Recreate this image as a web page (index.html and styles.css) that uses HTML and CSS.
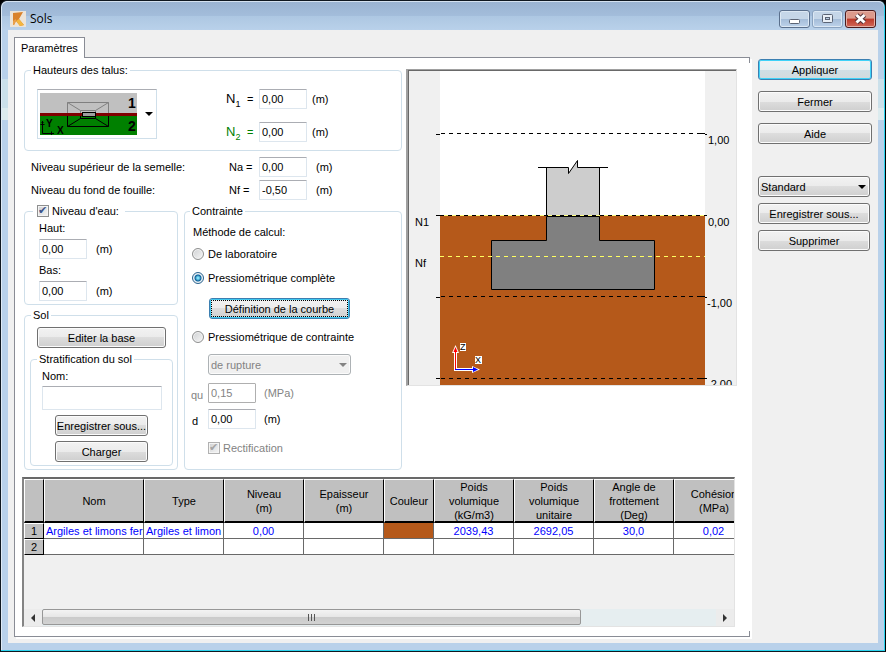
FILE: index.html
```html
<!DOCTYPE html>
<html lang="fr">
<head>
  <meta charset="UTF-8">
  <meta name="viewport" content="width=device-width, initial-scale=1.0">
  <title>Sols</title>
  <link rel="stylesheet" href="styles.css">
</head>
<body>
  <div class="window">
    <header class="titlebar">
      <svg class="app-icon" width="16" height="16" viewBox="0 0 16 16">
        <rect width="16" height="16" fill="#ece4d8"/>
        <path d="M3 2 L13 1 L9 8 L14 14 L10 15 L6 10 L4 14 L3 14 Z" fill="#d9822b"/>
        <path d="M3 10 L6 8 L6 10 L4 14 L3 14 Z" fill="#e9a04a"/>
        <path d="M6 10 L9 8 L14 14 L10 15 Z" fill="#f3b640"/>
      </svg>
      <h1>Sols</h1>
      <div class="window-buttons">
        <button type="button" class="win-btn" aria-label="Réduire">
          <svg width="31" height="16" viewBox="0 0 31 16"><rect x="10.500" y="8.500" width="10" height="4" rx="1" fill="#fff" stroke="#5b6475"/></svg>
        </button>
        <button type="button" class="win-btn win-max" aria-label="Agrandir">
          <svg width="31" height="16" viewBox="0 0 31 16"><rect x="10.500" y="3.500" width="10" height="8" rx="1" fill="#e9eff6" stroke="#5b6475"/><rect x="13.500" y="6.500" width="4" height="2" fill="#b9cce2" stroke="#5b6475"/></svg>
        </button>
        <button type="button" class="win-btn win-close" aria-label="Quitter">
          <svg width="31" height="16" viewBox="0 0 31 16"><path d="M11.500 4 L19.500 11.500 M19.500 4 L11.500 11.500" stroke="#53343a" stroke-width="5"/><path d="M11.500 4 L19.500 11.500 M19.500 4 L11.500 11.500" stroke="#fff" stroke-width="3"/></svg>
        </button>
      </div>
    </header>

    <form class="client">
      <main class="main">
        <div class="tabs"><a href="#panel" class="tab">Paramètres</a></div>

        <section class="panel" id="panel">
          <div class="top">
            <div class="params">
              <fieldset class="slopes">
                <legend>Hauteurs des talus:</legend>
                <div class="slopes-body">
                  <button type="button" class="slope-picker" aria-label="Type de talus">
                    <svg width="97" height="42" viewBox="0 0 97 42">
                      <rect width="97" height="42" fill="#c0c0c0"/>
                      <rect y="22" width="97" height="20" fill="#008000"/>
                      <g fill="none">
                        <path d="M27.500 20 V9.500 H68.500 V20 M27.500 9.500 L40.500 17.500 M68.500 9.500 L55.500 17.500 M40.500 20 V17.500 H55.500 V20" stroke="#808080"/>
                        <path d="M27.500 23 V33.500 H68.500 V23 M27.500 33.500 L40.500 25.500 M68.500 33.500 L55.500 25.500 M40.500 23 V25.500 H55.500 V23" stroke="#000"/>
                      </g>
                      <rect y="20" width="97" height="3" fill="#800000"/>
                      <rect x="42.500" y="19.500" width="13" height="4" fill="#a0a0a0" stroke="#000"/>
                      <path d="M2.500 28 V40.500 H14 M0.500 31.500 H4.500 M1.500 29.500 H3.500 M11.500 38.500 V42" stroke="#000" fill="none"/>
                      <text x="6" y="34" class="axis-bold">Y</text>
                      <text x="17" y="41" class="axis-bold">X</text>
                      <text x="88" y="15" class="slope-number">1</text>
                      <text x="88" y="38" class="slope-number">2</text>
                    </svg>
                    <span class="arrow"></span>
                  </button>
                  <div class="slope-values">
                    <div class="value-row">
                      <label for="n1" class="level-name">N<sub>1</sub></label>
                      <span class="equals">=</span>
                      <input type="text" id="n1" value="0,00">
                      <span class="unit-near">(m)</span>
                    </div>
                    <div class="value-row green">
                      <label for="n2" class="level-name">N<sub>2</sub></label>
                      <span class="equals">=</span>
                      <input type="text" id="n2" value="0,00">
                      <span class="unit-near">(m)</span>
                    </div>
                  </div>
                </div>
              </fieldset>

              <div class="levels">
                <label for="na">Niveau supérieur de la semelle:</label>
                <span>Na =</span>
                <input type="text" id="na" value="0,00">
                <span>(m)</span>
                <label for="nf">Niveau du fond de fouille:</label>
                <span>Nf =</span>
                <input type="text" id="nf" value="-0,50">
                <span>(m)</span>
              </div>

              <div class="groups">
                <div class="groups-left">
                  <fieldset class="water">
                    <legend><input type="checkbox" id="water" checked><label for="water">Niveau d'eau:</label></legend>
                    <label for="haut">Haut:</label>
                    <div class="field"><input type="text" id="haut" value="0,00"><span>(m)</span></div>
                    <label for="bas">Bas:</label>
                    <div class="field"><input type="text" id="bas" value="0,00"><span>(m)</span></div>
                  </fieldset>

                  <fieldset class="soil">
                    <legend>Sol</legend>
                    <button type="button" class="btn">Editer la base</button>
                    <fieldset class="strata">
                      <legend>Stratification du sol</legend>
                      <label for="nom">Nom:</label>
                      <input type="text" id="nom" class="name-input">
                      <button type="button" class="btn">Enregistrer sous...</button>
                      <button type="button" class="btn">Charger</button>
                    </fieldset>
                  </fieldset>
                </div>

                <fieldset class="stress">
                  <legend>Contrainte</legend>
                  <p>Méthode de calcul:</p>
                  <div class="choice"><input type="radio" name="method" id="lab"><label for="lab">De laboratoire</label></div>
                  <div class="choice"><input type="radio" name="method" id="full" checked><label for="full">Pressiométrique complète</label></div>
                  <button type="button" class="btn btn-focus">Définition de la courbe</button>
                  <div class="choice"><input type="radio" name="method" id="constraint"><label for="constraint">Pressiométrique de contrainte</label></div>
                  <div class="select-wrap disabled">
                    <select aria-label="Contrainte" disabled><option>de rupture</option></select>
                  </div>
                  <div class="stress-row disabled"><label for="qu">qu</label><input type="text" id="qu" value="0,15" disabled><span>(MPa)</span></div>
                  <div class="stress-row"><label for="d">d</label><input type="text" id="d" value="0,00"><span>(m)</span></div>
                  <div class="choice rectif disabled"><input type="checkbox" id="rectif" checked disabled><label for="rectif">Rectification</label></div>
                </fieldset>
              </div>
            </div>

            <div class="drawing">
              <svg viewBox="409 71 327 314">
                <rect x="409" y="71" width="327" height="314" fill="#f0f0f0"/>
                <rect x="440" y="71" width="265" height="145" fill="#fff"/>
                <rect x="440" y="216" width="265" height="169" fill="#b5591a"/>
                <!-- column above ground -->
                <path d="M546.500 216 V167.500 H568.500 V173.500 L577.500 160.500 V167.500 H599.500 V216" fill="#cdcdcd"/>
                <path d="M546.500 216 V167.500 M599.500 216 V167.500 M538 167.500 H568.500 V173.500 L577.500 160.500 V167.500 H608" fill="none" stroke="#000"/>
                <!-- footing -->
                <path d="M546.500 216.500 H599.500 V240.500 H654.500 V289.500 H491.500 V240.500 H546.500 Z" fill="#808080" stroke="#000"/>
                <path d="M440 215.500 H705" stroke="#ffff80"/>
                <path d="M441 133.500 H705 M440 215.500 H705 M441 296.500 H705 M441 378.500 H705" stroke="#000" stroke-dasharray="4 4"/>
                <path d="M440 256.500 H705" stroke="#ffff60" stroke-dasharray="4 4"/>
                <path d="M436 134.500 H440 M705 134.500 H707 M436 215.500 H440 M705 215.500 H707 M436 297.500 H440 M705 297.500 H707 M436 378.500 H440 M698 378.500 H707 M698 133.500 H705 M698 296.500 H705" stroke="#000"/>
                <g class="scale">
                  <text x="708" y="144">1,00</text>
                  <text x="708" y="226">0,00</text>
                  <text x="707" y="307">-1,00</text>
                  <text x="707" y="388">-2,00</text>
                  <text x="415" y="226">N1</text>
                  <text x="415" y="267">Nf</text>
                </g>
                <!-- axes -->
                <path d="M455.500 371 V350 M454 369.500 H474" stroke="#fff" stroke-width="3"/>
                <path d="M455.500 345 L459 353 H452 Z M480 369.500 L472 366 V373 Z" fill="#fff"/>
                <path d="M455.500 370 V350" stroke="#f00"/>
                <path d="M455 369.500 H474" stroke="#00f"/>
                <path d="M455.500 347 L457.500 352 H453.500 Z" fill="#f00"/>
                <path d="M478 369.500 L473 367 V372 Z" fill="#00f"/>
                <path d="M460 343 H466 V351 H460 Z M475 356 H482 V364 H475 Z" fill="#fff"/>
                <text x="460" y="350" class="axis">Z</text>
                <text x="475" y="363" class="axis">X</text>
              </svg>
            </div>
          </div>

          <div class="grid">
            <div class="grid-view">
              <table>
                <colgroup>
                  <col class="c-num"><col class="c-name"><col><col><col><col class="c-color"><col><col><col><col>
                </colgroup>
                <thead>
                  <tr>
                    <th></th>
                    <th><div>Nom</div></th>
                    <th><div>Type</div></th>
                    <th><div>Niveau<br>(m)</div></th>
                    <th><div>Epaisseur<br>(m)</div></th>
                    <th><div>Couleur</div></th>
                    <th><div>Poids<br>volumique<br>(kG/m3)</div></th>
                    <th><div>Poids<br>volumique<br>unitaire</div></th>
                    <th><div>Angle de<br>frottement<br>(Deg)</div></th>
                    <th><div>Cohésion<br>(MPa)</div></th>
                  </tr>
                </thead>
                <tbody>
                  <tr>
                    <th>1</th>
                    <td class="left">Argiles et limons fer</td>
                    <td class="left">Argiles et limon</td>
                    <td>0,00</td>
                    <td></td>
                    <td class="swatch"></td>
                    <td>2039,43</td>
                    <td>2692,05</td>
                    <td>30,0</td>
                    <td>0,02</td>
                  </tr>
                  <tr>
                    <th>2</th>
                    <td></td><td></td><td></td><td></td><td></td><td></td><td></td><td></td><td></td>
                  </tr>
                </tbody>
              </table>
            </div>
            <div class="scrollbar">
              <button type="button" aria-label="Défiler à gauche"><span class="arrow arrow-left"></span></button>
              <div class="track"><div class="thumb"><i></i><i></i><i></i></div></div>
              <button type="button" aria-label="Défiler à droite"><span class="arrow arrow-right"></span></button>
            </div>
          </div>
        </section>
      </main>

      <aside class="side">
        <div class="side-main">
          <button type="button" class="btn btn-default">Appliquer</button>
          <button type="button" class="btn">Fermer</button>
          <button type="button" class="btn">Aide</button>
        </div>
        <div class="side-presets">
          <div class="select-wrap">
            <select aria-label="Modèle"><option>Standard</option></select>
          </div>
          <button type="button" class="btn">Enregistrer sous...</button>
          <button type="button" class="btn">Supprimer</button>
        </div>
      </aside>
    </form>
  </div>
</body>
</html>
```
FILE: styles.css
```css
* {
  box-sizing: border-box;
}

body {
  margin: 0;
  background: #000;
  font-family: "Liberation Sans", Arial, sans-serif;
  font-size: 11px;
  line-height: 14px;
  color: #000;
}

button, input, select {
  font: inherit;
  color: inherit;
  margin: 0;
}

p {
  margin: 0;
}

/* window frame */
.window {
  display: flex;
  flex-direction: column;
  min-height: 100vh;
  padding: 0 7px 8px 7px;
  border: 1px solid #101820;
  border-right-color: #000;
  border-radius: 7px 7px 0 0;
  background: linear-gradient(#b9d1ea 78px, #cbe0ea 78px, #cbe0ea 107px, #dcebee 107px, #dcebee 119px, #b9d1ea 119px);
  box-shadow: inset -1px -1px #2bd3ee, inset 1px 1px #dfeaf5;
}

.titlebar {
  display: flex;
  align-items: center;
  height: 29px;
  margin: 0 -6px;
  padding: 5px 8px 0 8px;
  border-radius: 6px 6px 0 0;
  border-top: 1px solid #d5e2f0;
  background: linear-gradient(#9bb4d2, #a3bddb 50%, #adc7e2 50%, #b9d1ea);
}

.titlebar h1 {
  margin: 0 0 0 4px;
  font: 12px/16px "Open Sans", "Noto Sans", sans-serif;
}

.window-buttons {
  display: flex;
  gap: 2px;
  margin-left: auto;
}

.win-btn {
  width: 31px;
  height: 18px;
  padding: 0;
  border: 1px solid #5a6f8c;
  border-radius: 3px;
  background: linear-gradient(#c5d6e8 50%, #a4bcd8 50%, #bdd2ea);
  box-shadow: inset 0 0 0 1px #dce8f4;
  overflow: hidden;
}

.win-btn svg {
  display: block;
  margin-left: -1px;
}

.win-max {
  border-color: #8ba3c0;
}

.win-close {
  border-color: #4a1a1c;
  background: linear-gradient(#dc9a8c 45%, #bc3a2a 50%, #d1685a);
  box-shadow: inset 0 0 0 1px #e5b0a6;
}

.client {
  display: flex;
  flex: 1;
  background: #f0f0f0;
}

.main {
  display: flex;
  flex: 1;
  flex-direction: column;
  min-width: 0;
  padding: 7px 8px 6px 6px;
}

.side {
  width: 120px;
  padding: 29px 6px 0 0;
}

/* tab and its panel */
.tabs {
  display: flex;
  margin-bottom: -1px;
}

.tab {
  position: relative;
  z-index: 1;
  height: 21px;
  padding: 3px 6px 0;
  border: 1px solid #898c95;
  border-bottom: 0;
  background: #fff;
  color: #000;
  text-decoration: none;
}

.panel {
  position: relative;
  display: flex;
  flex: 1;
  flex-direction: column;
  padding: 5px 13px 9px 7px;
  border: 1px solid #898c95;
  border-right: 0;
  background: #fff;
  box-shadow: 2px 2px #fff;
}

.panel::before,
.panel::after {
  content: "";
  position: absolute;
  right: 0;
  width: 1px;
  height: 5px;
  background: #898c95;
}

.panel::before {
  top: 0;
}

.panel::after {
  bottom: 0;
}

.top {
  display: flex;
  gap: 4px;
}

.params {
  width: 380px;
  padding-left: 2px;
}

/* group boxes */
fieldset {
  min-width: 0;
  margin: 0;
  padding: 0;
  border: 1px solid #cfdfea;
  border-radius: 4px;
}

legend {
  height: 14px;
  margin-left: 6px;
  padding: 0 2px;
}

input[type="text"] {
  width: 48px;
  height: 20px;
  padding: 0 2px;
  border: 1px solid #dde6ee;
  border-top-color: #abadb3;
  border-radius: 1px;
  background: #fff;
}

.slopes {
  height: 88px;
}

.slopes-body {
  display: flex;
  padding: 12px 0 0 12px;
}

.slope-picker {
  display: flex;
  align-items: center;
  gap: 8px;
  width: 120px;
  height: 50px;
  padding: 0 0 0 2px;
  border: 1px solid #cfdfea;
  border-top-color: #abadb3;
  background: #fff;
}

.axis-bold {
  font-size: 10px;
  font-weight: bold;
}

.slope-number {
  font-size: 14px;
  font-weight: bold;
}

.arrow {
  width: 0;
  height: 0;
  border: 4px solid transparent;
  border-top-color: #000;
  border-bottom: 0;
}

.arrow-left {
  border: 4px solid transparent;
  border-left: 0;
  border-right-color: #333;
}

.arrow-right {
  border: 4px solid transparent;
  border-right: 0;
  border-left-color: #333;
}

.slope-values {
  display: flex;
  flex-direction: column;
  gap: 13px;
  margin-left: 69px;
}

.value-row {
  display: flex;
  align-items: center;
}

.level-name {
  width: 21px;
  font-size: 13px;
}

.level-name sub {
  font-size: 9px;
  line-height: 0;
}

.equals {
  width: 12px;
}

.green .level-name,
.green .equals {
  color: #008000;
}

.unit-near {
  margin-left: 5px;
}

.levels {
  display: grid;
  grid-template-columns: 198px 30px 57px auto;
  align-items: center;
  row-gap: 3px;
  padding: 6px 0 4px 7px;
}

.groups {
  display: flex;
  gap: 6px;
}

.groups-left {
  display: flex;
  flex-direction: column;
  gap: 3px;
  width: 154px;
}

.water {
  height: 101px;
  padding: 3px 14px 0;
}

.water legend {
  display: flex;
  align-items: center;
  gap: 3px;
  margin-left: -6px;
  padding: 0 6px 0 4px;
}

.field {
  display: flex;
  align-items: center;
  gap: 9px;
  margin: 4px 0;
}

.soil {
  flex: 1;
  padding: 0 4px 3px 5px;
}

.soil > legend {
  margin-left: 1px;
}

.soil > .btn {
  width: 129px;
  margin: 5px 0 4px 7px;
}

.strata {
  display: flex;
  flex-direction: column;
  padding: 3px 11px;
}

.strata legend {
  margin-left: -5px;
}

.strata .name-input {
  width: 120px;
  height: 24px;
  margin-top: 3px;
}

.strata .btn {
  width: 93px;
  margin: 5px 0 0 13px;
}

.stress {
  flex: 1;
  padding: 0 7px;
}

.stress legend {
  margin-left: -2px;
}

.stress p {
  margin: 7px 0 8px 1px;
}

.choice {
  display: flex;
  align-items: center;
  gap: 4px;
  height: 14px;
  margin-bottom: 10px;
}

.stress .btn {
  display: block;
  width: 141px;
  margin: 13px 0 11px 17px;
}

.stress .select-wrap {
  width: 143px;
  margin-left: 16px;
}

.stress-row {
  display: flex;
  align-items: center;
  gap: 8px;
  margin-top: 6px;
}

.select-wrap + .stress-row {
  margin-top: 8px;
}

.stress-row label {
  width: 8px;
  margin-top: 3px;
}

.stress-row.disabled label {
  margin-left: -1px;
  width: 9px;
}

.rectif {
  gap: 3px;
  margin: 12px 0 0 16px;
}

.disabled {
  color: #838383;
}

.stress-row.disabled input {
  border-color: #afafaf;
}

/* radios and check boxes */
input[type="radio"],
input[type="checkbox"] {
  appearance: none;
  flex: none;
  width: 12px;
  height: 12px;
  border: 1px solid #8e8f8f;
  background: linear-gradient(135deg, #cfd1d3, #f6f6f6);
  box-shadow: inset 0 0 0 1px #f4f4f4;
}

input[type="radio"] {
  border-radius: 50%;
}

input[type="radio"]:checked {
  border-color: #2a628d;
  background: radial-gradient(circle, #7fe0f8 1px, #0c5f98 3px, #cfe4f2 4px);
}

input[type="checkbox"]:checked::before {
  content: "✔";
  display: block;
  font: 11px/10px "DejaVu Sans", sans-serif;
  color: #3c548c;
}

input[type="checkbox"]:disabled {
  border-color: #b1b1b1;
}

input[type="checkbox"]:disabled::before {
  color: #a5a5a5;
}

/* buttons and drop-downs */
.btn,
select {
  height: 21px;
  padding: 0;
  border: 1px solid #707070;
  border-radius: 3px;
  background: linear-gradient(#f2f2f2, #ebebeb 50%, #dddddd 50%, #cfcfcf);
  box-shadow: inset 0 0 0 1px #fbfbfb;
  white-space: nowrap;
}

.btn-default {
  border-color: #3c7fb1;
  box-shadow: inset 0 0 0 1px #3fd2f8;
  background: linear-gradient(#eef3f4, #e6eef0 50%, #cfdfe6 50%, #d3dadd);
}

.btn-focus {
  border-color: #3c7fb1;
  box-shadow: inset 0 0 0 1px #3fc8f0;
  outline: 1px dotted #000;
  outline-offset: -3px;
}

.select-wrap {
  position: relative;
}

.select-wrap::after {
  content: "";
  position: absolute;
  top: 9px;
  right: 4px;
  border: 4px solid transparent;
  border-top-color: #000;
  border-bottom: 0;
}

.select-wrap select {
  appearance: none;
  display: block;
  width: 100%;
  padding-left: 2px;
}

.select-wrap.disabled::after {
  border-top-color: #838383;
}

.select-wrap.disabled select {
  border-color: #adb2b5;
  background: #f0f0f0;
  opacity: 1;
}

.side-main,
.side-presets {
  display: flex;
  flex-direction: column;
}

.side-main {
  gap: 11px;
}

.side-presets {
  gap: 6px;
  width: 112px;
  margin-top: 32px;
}

/* foundation drawing */
.drawing {
  flex: 1;
  align-self: flex-start;
  margin-top: 6px;
  border: 2px solid #a0a0a0;
  border-width: 1px 1px 1px 2px;
  border-right-color: #e3e3e3;
  border-bottom-color: #e3e3e3;
}

.drawing svg {
  display: block;
  width: 100%;
  border: 0 solid #696969;
  border-width: 1px 0 0 1px;
}

.axis {
  font-size: 9px;
}

/* soil layers table */
.grid {
  display: flex;
  flex: 1;
  flex-direction: column;
  margin: 7px 2px 0 0;
  border: 1px solid #e3e3e3;
  border-top: 2px solid #696969;
  border-left: 2px solid #848484;
  background: #f0f0f0;
}

.grid-view {
  flex: 1;
  overflow: hidden;
}

table {
  width: 730px;
  table-layout: fixed;
  border-collapse: separate;
  border-spacing: 0;
}

col {
  width: 80px;
}

.c-num {
  width: 20px;
}

.c-name {
  width: 100px;
}

.c-color {
  width: 50px;
}

th, td {
  height: 16px;
  padding: 0;
  line-height: 14px;
  text-align: center;
  overflow: hidden;
  white-space: nowrap;
}

th {
  border: 1px solid #fff;
  border-right-color: #000;
  border-bottom-color: #000;
  background: #c0c0c0;
  font-weight: normal;
}

thead th {
  height: 44px;
  border-bottom-width: 2px;
}

thead th div {
  max-height: 41px;
  overflow: hidden;
}

td {
  border: 0 solid #696969;
  border-width: 0 1px 1px 0;
  background: #fff;
  color: #00f;
}

td.left {
  padding-left: 2px;
  text-align: left;
}

td.swatch {
  background: #b5591a;
}

.scrollbar {
  display: flex;
  height: 17px;
  background: #e6eef0;
}

.scrollbar button {
  display: flex;
  align-items: center;
  justify-content: center;
  width: 18px;
  padding: 0;
  border: 0;
  background: #ececec;
}

.track {
  display: flex;
  flex: 1;
}

.thumb {
  display: flex;
  align-items: center;
  justify-content: center;
  gap: 2px;
  width: 80%;
  margin-bottom: 1px;
  border: 1px solid #979797;
  border-radius: 2px;
  background: linear-gradient(#f3f3f3, #e6e6e6 50%, #cacaca 50%, #d2d2d2);
}

.thumb i {
  width: 1px;
  height: 7px;
  background: #555;
}
```
